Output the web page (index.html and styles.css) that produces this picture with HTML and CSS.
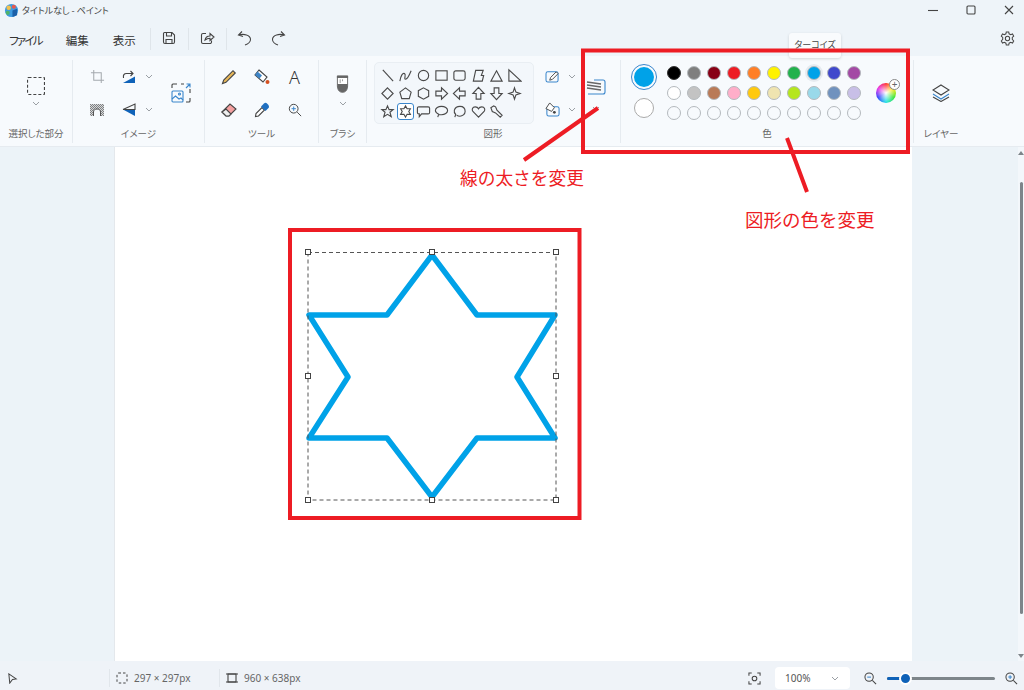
FILE: index.html
```html
<!DOCTYPE html>
<html lang="ja">
<head>
	<meta charset="UTF-8">
	<title>タイトルなし - ペイント</title>
	<link rel="stylesheet" href="styles.css">
</head>
<body>

<div id="app">

	<!-- title bar -->
	<div class="titlebar">
		<svg class="logo" viewBox="0 0 16 16" width="15" height="15">
			<circle cx="8" cy="8" r="7" fill="#3d9be0"/>
			<circle cx="5" cy="5" r="2.400" fill="#f2c14e"/>
			<circle cx="10.500" cy="4" r="2.200" fill="#e8574d"/>
			<circle cx="4" cy="10.500" r="2.200" fill="#4fb36b"/>
			<path d="M9 15 V8 L14 6 V13 Z" fill="#1b5fa8"/>
		</svg>
		<span class="title-text">タイトルなし - ペイント</span>
		<div class="win-btns">
			<svg viewBox="0 0 10 10" width="10" height="10"><path d="M0 5.500H10" class="ln"/></svg>
			<svg viewBox="0 0 10 10" width="10" height="10"><rect x="1" y="1" width="8" height="8" rx="1" class="ln"/></svg>
			<svg viewBox="0 0 10 10" width="10" height="10"><path d="M1 1L9 9M9 1L1 9" class="ln"/></svg>
		</div>
	</div>

	<!-- menu bar -->
	<div class="menubar">
		<a class="menu-item kana">ファイル</a>
		<a class="menu-item">編集</a>
		<a class="menu-item">表示</a>
		<span class="menu-sep first"></span>
		<svg class="menu-ico" viewBox="0 0 16 16" width="16" height="16"><path d="M3.500 2.500H11L13.500 5V12a1.500 1.500 0 0 1-1.500 1.500H4A1.500 1.500 0 0 1 2.500 12V3.500a1 1 0 0 1 1-1ZM5.500 2.500V6H10.500V2.500M5 13.500V9.500H11V13.500" class="ln"/></svg>
		<span class="menu-sep"></span>
		<svg class="menu-ico" viewBox="0 0 16 16" width="16" height="16"><path d="M7 3.500H4A1.500 1.500 0 0 0 2.500 5V12A1.500 1.500 0 0 0 4 13.500H11A1.500 1.500 0 0 0 12.500 12V10.500M6 10C6.500 7.500 8.500 6 11 6V3.500L15 7L11 10.500V8.300C9 8.300 7.500 8.800 6 10Z" class="ln"/></svg>
		<span class="menu-sep"></span>
		<svg class="menu-ico" viewBox="0 0 16 16" width="16" height="16"><path d="M5 1.500L1.500 5L6 6.500M2 5C7 3.500 13 5 13.500 9C13.800 11.500 11 14 8 15" class="ln"/></svg>
		<svg class="menu-ico redo" viewBox="0 0 16 16" width="16" height="16"><path d="M11 1.500L14.500 5L10 6.500M14 5C9 3.500 3 5 2.500 9C2.200 11.500 5 14 8 15" class="ln"/></svg>
		<svg class="gear" viewBox="0 0 16 16" width="15" height="15"><path d="M6.700 1H9.300L9.700 3L11.400 3.900L13.300 3.200L14.600 5.400L13.100 6.800V8.900L14.600 10.600L13.300 12.800L11.400 12.100L9.700 13L9.300 15H6.700L6.300 13L4.600 12.100L2.700 12.800L1.400 10.600L2.900 8.900V6.800L1.400 5.400L2.700 3.200L4.600 3.900L6.300 3Z" class="ln"/><circle cx="8" cy="8" r="2.300" class="ln"/></svg>
	</div>

	<!-- ribbon -->
	<div class="ribbon">

		<div class="group g-select">
			<div class="group-body col-center">
				<svg class="sel-ico" viewBox="0 0 18 18" width="18" height="18"><rect x="0.500" y="0.500" width="17" height="17" rx="1" class="dash"/></svg>
				<svg class="chev" viewBox="0 0 8 5" width="8" height="5"><path d="M1 1L4 4L7 1"/></svg>
			</div>
			<div class="group-label">選択した部分</div>
		</div>

		<div class="group g-image">
			<div class="group-body image-grid">
				<div class="btn">
					<svg viewBox="0 0 16 16" width="15" height="15"><path d="M4 1V12H15M1 4H12V15" class="ln faint"/></svg>
				</div>
				<div class="btn">
					<svg viewBox="0 0 14 14" width="14" height="14"><path d="M1 13L13 6.500V13Z" fill="#0f62b8"/><path d="M1.500 8C1 5 2 3.500 4.500 3.500H11M8.500 1L11 3.500L8.500 6" class="ln"/></svg>
				</div>
				<svg class="chev" viewBox="0 0 8 5" width="8" height="5"><path d="M1 1L4 4L7 1"/></svg>
				<div class="btn big">
					<svg viewBox="0 0 20 20" width="20" height="20">
						<path d="M1 5V2A1 1 0 0 1 2 1H6M19 15V18A1 1 0 0 1 18 19H15M10 1H13M19 6V10" class="ln"/>
						<path d="M15 5L19 1M15.500 1H19V4.500" class="ln blue"/>
						<rect x="1" y="8" width="11" height="11" rx="1" class="ln blue"/>
						<path d="M1 16L4.500 13L8 16L10 15L12 17" class="ln blue"/>
						<circle cx="8.500" cy="11" r="1" class="ln blue"/>
					</svg>
				</div>
				<div class="btn">
					<svg viewBox="0 0 14 12" width="14" height="12">
						<defs><pattern id="checks" width="2" height="2" patternUnits="userSpaceOnUse"><rect width="2" height="2" fill="#d5d8db"/><rect width="1" height="1" fill="#808080"/><rect x="1" y="1" width="1" height="1" fill="#808080"/></pattern></defs>
						<rect width="14" height="12" fill="url(#checks)"/>
						<path d="M3.500 12V8C3.500 6 5 5 7 5S10.500 6 10.500 8V12" fill="#f7fafd" stroke="#555" stroke-width="1"/>
					</svg>
				</div>
				<div class="btn">
					<svg viewBox="0 0 14 14" width="14" height="14"><path d="M1 6.500L13 13V6.500Z" fill="#0f62b8"/><path d="M1 6.500L13 1V6.500H1" class="ln"/></svg>
				</div>
				<svg class="chev" viewBox="0 0 8 5" width="8" height="5"><path d="M1 1L4 4L7 1"/></svg>
			</div>
			<div class="group-label">イメージ</div>
		</div>

		<div class="group g-tools">
			<div class="group-body tools-grid">
				<div class="btn">
					<svg viewBox="0 0 16 16" width="16" height="16"><path d="M1.500 14.500L2.700 11L12 1.700L14.300 4L5 13.300Z" fill="#e8b85a" stroke="#444" stroke-width="1.100"/></svg>
				</div>
				<div class="btn">
					<svg viewBox="0 0 16 16" width="16" height="16"><path d="M5 1L13 8L9 13L1 6Z" fill="#fff" stroke="#444" stroke-width="1.100"/><path d="M3.500 2.500L8 6.500L5.500 9.500L1 6Z" fill="#3d84c6"/><circle cx="13.500" cy="13" r="2" fill="#d4501f"/></svg>
				</div>
				<div class="btn"><span class="text-tool">A</span></div>
				<div class="btn">
					<svg viewBox="0 0 16 16" width="16" height="16"><path d="M1 10L9 2L15 7L8 14H5Z" fill="#f4a0a0" stroke="#444" stroke-width="1.100"/><path d="M1 10L5 14H8L10 12L5 7Z" fill="#eee" stroke="#444" stroke-width="1.100"/></svg>
				</div>
				<div class="btn">
					<svg viewBox="0 0 16 16" width="16" height="16"><path d="M1.500 14.500L2 11.500L8 5.500L10.500 8L4.500 14Z" fill="#fff" stroke="#444" stroke-width="1.100"/><path d="M7 4.500L10 1.500C11 .5 12 .5 13.500 2S15.500 5 14.500 6L11.500 9Z" fill="#1f6fc0"/></svg>
				</div>
				<div class="btn">
					<svg viewBox="0 0 16 16" width="14" height="14"><circle cx="6.500" cy="6.500" r="5" class="ln"/><path d="M10.500 10.500L15 15" class="ln"/><path d="M4 6.500H9M6.500 4V9" class="ln blue"/></svg>
				</div>
			</div>
			<div class="group-label">ツール</div>
		</div>

		<div class="group g-brush">
			<div class="group-body col-center">
				<svg viewBox="0 0 14 20" width="13" height="20"><path d="M1.500 1.500H12.500V12C12.500 16 10.500 19 7 19S1.500 16 1.500 12Z" fill="#fff" stroke="#666" stroke-width="1"/><path d="M1.500 10H12.500V12C12.500 16 10.500 19 7 19S1.500 16 1.500 12Z" fill="#666"/><rect x="1" y="1" width="12" height="2.500" fill="#666"/><path d="M4.500 5V9M7 5V7" stroke="#999" stroke-width="1"/></svg>
				<svg class="chev" viewBox="0 0 8 5" width="8" height="5"><path d="M1 1L4 4L7 1"/></svg>
			</div>
			<div class="group-label">ブラシ</div>
		</div>

		<div class="group g-shapes">
			<div class="group-body shapes-body">
				<div class="shape-panel">
					<svg class="shape" viewBox="0 0 16 16"><path d="M3 2L14 14"/></svg>
					<svg class="shape" viewBox="0 0 16 16"><path d="M2 14C3 8 5 5 7 6S6 12 8 12 12 8 14 3"/></svg>
					<svg class="shape" viewBox="0 0 16 16"><circle cx="8" cy="8" r="5.500"/></svg>
					<svg class="shape" viewBox="0 0 16 16"><rect x="2" y="3" width="12" height="10"/></svg>
					<svg class="shape" viewBox="0 0 16 16"><rect x="2" y="3" width="12" height="10" rx="2"/></svg>
					<svg class="shape" viewBox="0 0 16 16"><path d="M2.500 14L5 2.500H13L11 8H13.500L12 14Z"/></svg>
					<svg class="shape" viewBox="0 0 16 16"><path d="M8 3L14 14H2Z"/></svg>
					<svg class="shape" viewBox="0 0 16 16"><path d="M2 2V14H15Z"/></svg>

					<svg class="shape" viewBox="0 0 16 16"><path d="M8 2L14 8L8 14L2 8Z"/></svg>
					<svg class="shape" viewBox="0 0 16 16"><path d="M8 2L14 6.500L12 13.500H4L2 6.500Z"/></svg>
					<svg class="shape" viewBox="0 0 16 16"><path d="M8 2L13.500 5V11L8 14L2.500 11V5Z"/></svg>
					<svg class="shape" viewBox="0 0 16 16"><path d="M2 5.500H8V2L14.500 8L8 14V10.500H2Z"/></svg>
					<svg class="shape" viewBox="0 0 16 16"><path d="M14 5.500H8V2L1.500 8L8 14V10.500H14Z"/></svg>
					<svg class="shape" viewBox="0 0 16 16"><path d="M5.500 14V8H2L8 1.500L14 8H10.500V14Z"/></svg>
					<svg class="shape" viewBox="0 0 16 16"><path d="M5.500 2V8H2L8 14.500L14 8H10.500V2Z"/></svg>
					<svg class="shape" viewBox="0 0 16 16"><path d="M8 2L9.500 6.500L14 8L9.500 9.500L8 14L6.500 9.500L2 8L6.500 6.500Z"/></svg>

					<svg class="shape" viewBox="0 0 16 16"><path d="M8 2L9.700 6H14L10.600 8.800L12 13.500L8 11L4 13.500L5.400 8.800L2 6H6.300Z"/></svg>
					<div class="shape-on"><svg class="shape" viewBox="0 0 16 16"><path d="M8 2L9.700 5H13.200L11.500 8L13.200 11H9.700L8 14L6.300 11H2.800L4.500 8L2.800 5H6.300Z"/></svg></div>
					<svg class="shape" viewBox="0 0 16 16"><path d="M3 3H13A1.500 1.500 0 0 1 14.500 4.500V9A1.500 1.500 0 0 1 13 10.500H6L3.500 13.500V10.500H3A1.500 1.500 0 0 1 1.500 9V4.500A1.500 1.500 0 0 1 3 3Z"/></svg>
					<svg class="shape" viewBox="0 0 16 16"><path d="M4 14L5 11C3 10 1.500 9 1.500 7C1.500 4.500 4.500 2.500 8 2.500S14.500 4.500 14.500 7 11.500 11.500 8 11.500C7 11.500 6 11.500 5.500 11.300"/></svg>
					<svg class="shape" viewBox="0 0 16 16"><path d="M3 14L4 11.200C2.800 10 2 8.500 2.500 6.500 3.500 3.500 6 2.500 8.500 2.500 12 2.500 14 5 14 8 14 11 11 13 8.500 13 7 13 5.800 12.500 5 12"/></svg>
					<svg class="shape" viewBox="0 0 16 16"><path d="M8 14L2 8C0.500 6 1.500 3 4.500 3 6 3 7.500 4 8 5 8.500 4 10 3 11.500 3 14.500 3 15.500 6 14 8Z"/></svg>
					<svg class="shape" viewBox="0 0 16 16"><path d="M2 4L5 2L7 3L8.500 6.500L14 12L12 14L7 9.500L3.500 8Z"/></svg>
				</div>

				<div class="style-col">
					<div class="style-row">
						<svg viewBox="0 0 16 14" width="15" height="13"><rect x="1" y="2" width="13" height="11" rx="2" class="ln blue"/><path d="M5 11L6 8L12 2L14 4L8 10Z" fill="#fff" stroke="#444" stroke-width="1"/></svg>
						<svg class="chev" viewBox="0 0 8 5" width="8" height="5"><path d="M1 1L4 4L7 1"/></svg>
					</div>
					<div class="style-row">
						<svg viewBox="0 0 16 16" width="15" height="15"><rect x="2" y="5" width="13" height="10" rx="2" class="ln blue"/><path d="M5 1L10 6L7 10L1 7Z" fill="#fff" stroke="#444" stroke-width="1"/><circle cx="10" cy="11" r="1.500" fill="#444"/></svg>
						<svg class="chev" viewBox="0 0 8 5" width="8" height="5"><path d="M1 1L4 4L7 1"/></svg>
					</div>
				</div>

				<div class="size-col">
					<svg viewBox="0 0 20 16" width="20" height="16"><path d="M8 1H17A2 2 0 0 1 19 3V13A2 2 0 0 1 17 15H2" class="ln blue"/><path d="M1 3L15 5M1 6L15 8M1 9L15 11" class="ln thick"/></svg>
					<svg class="chev" viewBox="0 0 8 5" width="8" height="5"><path d="M1 1L4 4L7 1"/></svg>
				</div>
			</div>
			<div class="group-label shapes-label">図形</div>
		</div>

		<div class="group g-colors">
			<div class="group-body colors-body">
				<div class="current-col">
					<div class="cur cur-1"><span class="cur-fill"></span></div>
					<div class="cur cur-2"></div>
				</div>
				<div class="swatches">
					<i class="sw s-black"></i><i class="sw s-gray"></i><i class="sw s-maroon"></i><i class="sw s-red"></i><i class="sw s-orange"></i><i class="sw s-yellow"></i><i class="sw s-green"></i><i class="sw s-cyan hover"></i><i class="sw s-indigo"></i><i class="sw s-purple"></i>
					<i class="sw s-white"></i><i class="sw s-silver"></i><i class="sw s-brown"></i><i class="sw s-pink"></i><i class="sw s-gold"></i><i class="sw s-cream"></i><i class="sw s-lime"></i><i class="sw s-sky"></i><i class="sw s-steel"></i><i class="sw s-lilac"></i>
					<i class="sw"></i><i class="sw"></i><i class="sw"></i><i class="sw"></i><i class="sw"></i><i class="sw"></i><i class="sw"></i><i class="sw"></i><i class="sw"></i><i class="sw"></i>
				</div>
				<div class="wheel"><span class="wheel-plus">+</span></div>
			</div>
			<div class="group-label colors-label">色</div>
		</div>

		<div class="group g-layers">
			<div class="group-body col-center layers-body">
				<svg viewBox="0 0 18 18" width="18" height="18"><path d="M9 1L17 6L9 11L1 6Z" class="ln"/><path d="M1 10L9 15L17 10" class="ln blue"/><path d="M1 13L9 17.500L17 13" class="ln"/></svg>
			</div>
			<div class="group-label">レイヤー</div>
		</div>
	</div>

	<!-- canvas area -->
	<div class="workspace">
		<div class="canvas"></div>
		<div class="scrollbar">
			<span class="arrow-up"></span>
			<span class="thumb"></span>
			<span class="arrow-down"></span>
		</div>
	</div>

	<!-- status bar -->
	<div class="statusbar">
		<div class="st-cell st-cursor">
			<svg viewBox="0 0 12 12" width="11" height="11"><path d="M2 1L10 6.500L6 7L3 11Z" class="ln"/></svg>
		</div>
		<div class="st-cell st-sel">
			<svg viewBox="0 0 12 12" width="12" height="12"><rect x="1" y="1" width="10" height="10" rx="1.500" class="dash thin"/></svg>
			<span>297 × 297px</span>
		</div>
		<div class="st-cell st-size">
			<svg viewBox="0 0 12 12" width="12" height="12"><rect x="2" y="2" width="8" height="8" class="ln"/><path d="M0 2H12M0 10H12" class="ln"/></svg>
			<span>960 × 638px</span>
		</div>
		<div class="st-right">
			<svg class="focus" viewBox="0 0 14 14" width="13" height="13"><path d="M1 4V1H4M10 1H13V4M13 10V13H10M4 13H1V10" class="ln"/><circle cx="7" cy="7" r="2.500" class="ln"/></svg>
			<div class="zoom-select">
				<span>100%</span>
				<svg class="chev" viewBox="0 0 8 5" width="8" height="5"><path d="M1 1L4 4L7 1"/></svg>
			</div>
			<svg class="zoom-ico" viewBox="0 0 14 14" width="13" height="13"><circle cx="5.500" cy="5.500" r="4.500" class="ln"/><path d="M9 9L13 13" class="ln"/><path d="M3.500 5.500H7.500" class="ln blue"/></svg>
			<div class="slider"><span class="slider-on"></span><span class="slider-thumb"></span></div>
			<svg class="zoom-ico" viewBox="0 0 14 14" width="13" height="13"><circle cx="5.500" cy="5.500" r="4.500" class="ln"/><path d="M9 9L13 13" class="ln"/><path d="M3.500 5.500H7.500M5.500 3.500V7.500" class="ln blue"/></svg>
		</div>
	</div>
</div>

<!-- things lying over the app: tooltip, drawing on the canvas, red notes -->
<div class="tooltip">ターコイズ</div>

<svg class="overlay" width="1024" height="690" viewBox="0 0 1024 690">
	<polygon class="star" points="432,255 477,315 555,315 517,377 555,438 477,438 432,497 387,438 309,438 348,377 309,315 387,315"/>
	<rect class="sel-box" x="308" y="252.500" width="248" height="247.500"/>
	<rect class="handle" x="305.500" y="249.500" width="5" height="5"/>
	<rect class="handle" x="429.500" y="249.500" width="5" height="5"/>
	<rect class="handle" x="553.500" y="249.500" width="5" height="5"/>
	<rect class="handle" x="305.500" y="373.500" width="5" height="5"/>
	<rect class="handle" x="553.500" y="373.500" width="5" height="5"/>
	<rect class="handle" x="305.500" y="497.500" width="5" height="5"/>
	<rect class="handle" x="429.500" y="497.500" width="5" height="5"/>
	<rect class="handle" x="553.500" y="497.500" width="5" height="5"/>
	<rect class="mark" x="290" y="230" width="289.500" height="288"/>
	<rect class="mark" x="583" y="50.500" width="325" height="101.500"/>
	<path class="mark" d="M598 108L524 160M787 138L807 192"/>
</svg>
<div class="note note-line">線の太さを変更</div>
<div class="note note-color">図形の色を変更</div>

</body>
</html>
```

FILE: styles.css
```css
*{
	margin: 0;
	padding: 0;
	box-sizing: border-box;
}
html,body{
	width: 1024px;
	height: 690px;
	overflow: hidden;
}
body{
	font-family: "Noto Sans CJK JP", "Noto Sans", sans-serif;
	font-feature-settings: "palt";
	color: #333;
	background-color: #eef4f9;
}
#app{
	display: flex;
	flex-direction: column;
	height: 690px;
}

/* shared svg bits */
.ln{
	fill: none;
	stroke: #444;
	stroke-width: 1.1;
}
.ln.blue{
	stroke: #3a86cc;
}
.ln.faint{
	stroke: #a4a9ae;
}
.ln.thick{
	stroke: #666;
	stroke-width: 1.4;
}
.dash{
	fill: none;
	stroke: #444;
	stroke-width: 1.2;
	stroke-dasharray: 3 2;
}
.dash.thin{
	stroke-width: 1;
	stroke-dasharray: 2.500 2;
}
.chev{
	fill: none;
	stroke: #9a9fa4;
	stroke-width: 1;
	display: block;
}

/* title bar */
.titlebar{
	height: 24px;
	display: flex;
	align-items: center;
	padding: 0 10px 6px 4px;
}
.logo{
	margin-top: 2px;
}
.title-text{
	margin-left: 3px;
	margin-top: 2px;
	font-size: 9px;
	color: #444;
}
.win-btns{
	margin-left: auto;
	margin-top: 1px;
	display: flex;
	gap: 28px;
}

/* menu bar */
.menubar{
	height: 32px;
	display: flex;
	align-items: center;
	padding-left: 9px;
	position: relative;
}
.menu-item{
	font-size: 11.500px;
	line-height: 16px;
	margin-right: 24px;
	color: #333;
}
.menu-item.kana{
	letter-spacing: -1.750px;
}
.menu-sep{
	width: 1px;
	height: 22px;
	background-color: #dfe5ea;
	margin: -2px 10px 0 11px;
}
.menu-sep.first{
	margin-left: -10px;
}
.menu-ico{
	margin-top: -4px;
}
.menu-ico.redo{
	margin-left: 17px;
}
.gear{
	margin-left: auto;
	margin-right: 9px;
	margin-top: -4px;
}

/* ribbon */
.ribbon{
	height: 91px;
	display: flex;
	background-color: #f7fafd;
	border-bottom: 1px solid #e6ebf0;
}
.group{
	margin: 4px 0 3px;
	display: flex;
	flex-direction: column;
	border-right: 1px solid #e6ebf0;
}
.group-body{
	height: 66px;
}
.group-label{
	height: 17px;
	line-height: 14px;
	font-size: 9.500px;
	text-align: center;
	color: #666;
}
.col-center{
	display: flex;
	flex-direction: column;
	align-items: center;
}
.btn{
	display: flex;
	align-items: center;
	justify-content: center;
}
.g-select{
	width: 73px;
}
.g-select .sel-ico{
	margin-top: 17px;
}
.g-select .chev{
	margin-top: 6px;
}
.g-image{
	width: 132px;
}
.image-grid{
	display: grid;
	grid-template-columns: 32px 32px 8px 51px;
	grid-template-rows: 33px 33px;
	padding-left: 8px;
	align-items: center;
	justify-items: center;
}
.btn.big{
	grid-column: 4;
	grid-row: 1 / 3;
	padding-left: 5px;
}
.g-tools{
	width: 114px;
}
.tools-grid{
	display: grid;
	grid-template-columns: repeat(3, 33px);
	grid-template-rows: 33px 33px;
	padding-left: 7px;
}
.text-tool{
	font-family: "Noto Sans", sans-serif;
	font-size: 18px;
	font-weight: 300;
	line-height: 18px;
	color: #333;
}
.g-brush{
	width: 48px;
}
.g-brush .group-body svg:first-child{
	margin-top: 14px;
}
.g-brush .chev{
	margin-top: 7px;
}
.g-shapes{
	width: 254px;
}
.shapes-body{
	display: flex;
}
.shape-panel{
	margin: 2px 0 0 7px;
	width: 160px;
	height: 62px;
	padding: 3px 3px;
	background-color: #f3f7fb;
	border: 1px solid #e9eef3;
	border-radius: 5px;
	display: grid;
	grid-template-columns: repeat(8, 18.200px);
	grid-template-rows: repeat(3, 18px);
	align-items: center;
	justify-items: center;
}
.shape{
	width: 15px;
	height: 15px;
	fill: none;
	stroke: #4a4a4a;
	stroke-width: 1.2;
	display: block;
}
.shape-on{
	border: 1px solid #3a86cc;
	border-radius: 3px;
	width: 17px;
	height: 17px;
	display: flex;
	align-items: center;
	justify-content: center;
	background-color: #fff;
}
.style-col{
	margin-left: 11px;
	width: 38px;
}
.style-row{
	height: 33px;
	display: flex;
	align-items: center;
	gap: 8px;
}
.size-col{
	margin-left: 1px;
	width: 24px;
	padding-top: 19px;
	display: flex;
	flex-direction: column;
	align-items: center;
	gap: 11px;
}
.shapes-label{
	width: 252px;
}
.g-colors{
	width: 293px;
}
.colors-body{
	display: flex;
}
.current-col{
	width: 43px;
	padding-top: 4px;
	display: flex;
	flex-direction: column;
	align-items: center;
}
.cur{
	border-radius: 50%;
}
.cur-1{
	width: 26px;
	height: 26px;
	padding: 2px;
	margin-left: 2px;
	border: 1px solid #3a86cc;
}
.cur-fill{
	display: block;
	width: 100%;
	height: 100%;
	border-radius: 50%;
	background-color: #00a2e8;
}
.cur-2{
	margin-top: 8px;
	margin-left: 2px;
	width: 20px;
	height: 20px;
	background-color: #fff;
	border: 1px solid #aaa;
}
.swatches{
	display: grid;
	grid-template-columns: repeat(10, 20px);
	grid-template-rows: repeat(3, 20px);
	padding-top: 3px;
	align-items: center;
	justify-items: center;
}
.sw{
	display: block;
	width: 14px;
	height: 14px;
	border-radius: 50%;
	border: 1px solid #b4b9bd;
}
.sw.hover{
	box-shadow: 0 0 0 2px #e6ebf0;
}
.s-black{ background-color: #000; border-color: #333; }
.s-gray{ background-color: #7f7f7f; }
.s-maroon{ background-color: #880015; }
.s-red{ background-color: #ed1c24; }
.s-orange{ background-color: #ff7f27; }
.s-yellow{ background-color: #fff200; }
.s-green{ background-color: #22b14c; }
.s-cyan{ background-color: #00a2e8; }
.s-indigo{ background-color: #3f48cc; }
.s-purple{ background-color: #a349a4; }
.s-white{ background-color: #fff; }
.s-silver{ background-color: #c3c3c3; }
.s-brown{ background-color: #b97a57; }
.s-pink{ background-color: #ffaec9; }
.s-gold{ background-color: #ffc90e; }
.s-cream{ background-color: #efe4b0; }
.s-lime{ background-color: #b5e61d; }
.s-sky{ background-color: #99d9ea; }
.s-steel{ background-color: #7092be; }
.s-lilac{ background-color: #c8bfe7; }
.wheel{
	position: relative;
	margin: 23px 0 0 12px;
	width: 20px;
	height: 20px;
	border-radius: 50%;
	background: radial-gradient(circle, #fff 0, rgba(255,255,255,0) 70%),
		conic-gradient(#ff2a2a, #ffe600, #2ee62e, #19e0e6, #2a3cff, #e62ae6, #ff2a2a);
}
.wheel-plus{
	position: absolute;
	right: -4px;
	top: -4px;
	width: 11px;
	height: 11px;
	border-radius: 50%;
	border: 1px solid #888;
	background-color: #fff;
	font-family: "Noto Sans", sans-serif;
	font-size: 10px;
	line-height: 8px;
	text-align: center;
	color: #666;
}
.colors-label{
	width: 292px;
}
.g-layers{
	width: 54px;
	border-right: none;
}
.layers-body{
	padding-top: 24px;
}

/* canvas area */
.workspace{
	flex: 1;
	display: flex;
	padding-left: 114px;
	background-color: #ecf3f8;
}
.canvas{
	width: 798px;
	background-color: #fff;
	border-left: 1px solid #e4e8ec;
}
.scrollbar{
	margin-left: auto;
	width: 6px;
	padding: 4px 0 3px;
	display: flex;
	flex-direction: column;
	align-items: center;
	background-color: #f3f7fb;
}
.arrow-up,.arrow-down{
	width: 0;
	height: 0;
	border-left: 3px solid transparent;
	border-right: 3px solid transparent;
}
.arrow-up{
	border-bottom: 4px solid #7d858a;
}
.arrow-down{
	margin-top: auto;
	border-top: 4px solid #7d858a;
}
.thumb{
	width: 3px;
	height: 432px;
	margin-top: 27px;
	background-color: #7d858a;
	border-radius: 2px;
}

/* status bar */
.statusbar{
	height: 29px;
	padding-top: 5px;
	display: flex;
	align-items: center;
	font-size: 10px;
	color: #666;
	font-family: "Noto Sans", "Noto Sans CJK JP", sans-serif;
	background-color: #eff3f8;
}
.st-cell{
	display: flex;
	align-items: center;
	height: 18px;
	gap: 6px;
	border-right: 1px solid #e1e6eb;
}
.st-cursor{
	width: 110px;
	padding-left: 7px;
}
.st-sel{
	width: 110px;
	padding-left: 6px;
}
.st-size{
	border-right: none;
	padding-left: 6px;
}
.st-right{
	margin-left: auto;
	display: flex;
	align-items: center;
}
.focus{
	margin-right: 14px;
}
.zoom-select{
	width: 75px;
	height: 22px;
	padding: 0 11px 0 10px;
	display: flex;
	align-items: center;
	justify-content: space-between;
	background-color: #fff;
	border-radius: 4px;
	font-size: 10px;
	color: #555;
}
.zoom-ico{
	margin-left: 14px;
}
.slider{
	position: relative;
	margin: 0 10px 0 10px;
	width: 108px;
	height: 3px;
	background-color: #7d858a;
	border-radius: 2px;
}
.zoom-ico:last-child{
	margin-left: 0;
	margin-right: 6px;
}
.slider-on{
	position: absolute;
	left: 0;
	top: 0;
	width: 14px;
	height: 3px;
	background-color: #0f62b8;
	border-radius: 2px;
}
.slider-thumb{
	position: absolute;
	left: 12px;
	top: -5px;
	width: 13px;
	height: 13px;
	border-radius: 50%;
	border: 2px solid #fff;
	background-color: #0f62b8;
}

/* over the app */
.tooltip{
	position: absolute;
	left: 789px;
	top: 33px;
	width: 52px;
	height: 25px;
	line-height: 24px;
	text-align: center;
	font-size: 9px;
	color: #444;
	background-color: #f9fbfd;
	border-radius: 3px;
	box-shadow: 0 1px 3px rgba(0,0,0,.15);
}
.overlay{
	position: absolute;
	left: 0;
	top: 0;
}
.star{
	fill: none;
	stroke: #00a2e8;
	stroke-width: 5.500;
	stroke-linejoin: round;
}
.sel-box{
	fill: none;
	stroke: #555;
	stroke-width: 1;
	stroke-dasharray: 4 3;
}
.handle{
	fill: #fff;
	stroke: #444;
	stroke-width: 1;
}
.mark{
	fill: none;
	stroke: #ed1c24;
	stroke-width: 4;
}
.note{
	position: absolute;
	color: #ed1c24;
	line-height: 24px;
	white-space: nowrap;
	font-feature-settings: normal;
}
.note-line{
	left: 460px;
	top: 165px;
	font-size: 17.700px;
}
.note-color{
	left: 745px;
	top: 207px;
	font-size: 18.500px;
}
```
